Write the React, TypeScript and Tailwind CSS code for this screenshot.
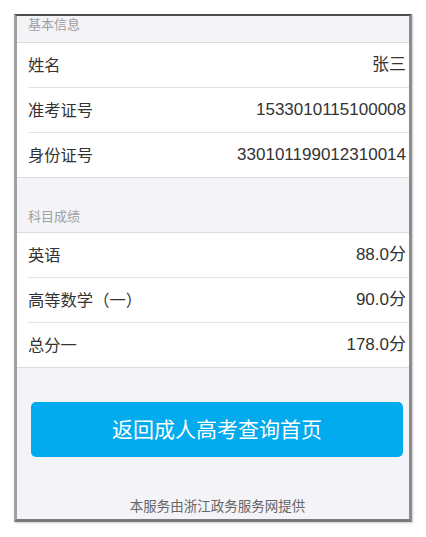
import React from "react";

const font = { fontFamily: '"Liberation Sans", "Noto Sans CJK SC", sans-serif' };

function Row({ label, value, last }: { label: string; value: string; last?: boolean }) {
  return (
    <div className={last ? "border-b border-[#dcdcdc] bg-white" : "bg-white"}>
      <div className={last ? "ml-[11px] flex h-[44px] items-center justify-between pr-[3px]" : "ml-[11px] flex h-[45px] items-center justify-between border-b border-[#e2e2e2] pr-[3px]"}>
        <span className="text-[16.3px] text-[#333]">{label}</span>
        <span className="text-[17px] text-[#333]">{value}</span>
      </div>
    </div>
  );
}

export default function App() {
  return (
    <div className="h-[537px] w-[426px] bg-white pl-[14px] pt-[14px]" style={font}>
      <div className="h-[508px] w-[398px] overflow-hidden border-b-[3px] border-l-[3px] border-r-[3px] border-t-[2px] border-b-[#7a7a7a] border-l-[#a0a0a0] border-r-[#8c8c8c] border-t-[#4d4d4d] bg-[#f3f3f8] shadow-[1px_1px_2px_rgba(0,0,0,0.2)]">
        <div className="border-b border-[#dcdcdc] pb-[8px] pl-[11px] text-[13px] leading-[18px] text-[#a0a0a0]">基本信息</div>
        <Row label="姓名" value="张三" />
        <Row label="准考证号" value="1533010115100008" />
        <Row label="身份证号" value="330101199012310014" last />
        <div className="border-b border-[#dcdcdc] pb-[6px] pl-[11px] pt-[30px] text-[13px] leading-[18px] text-[#a0a0a0]">科目成绩</div>
        <Row label="英语" value="88.0分" />
        <Row label="高等数学（一）" value="90.0分" />
        <Row label="总分一" value="178.0分" last />
        <div className="ml-[14px] mr-[6px] mt-[34px] flex h-[55px] items-center justify-center rounded-[5px] bg-[#02aaee] text-[21px] text-white">
          返回成人高考查询首页
        </div>
        <div className="mt-[41px] pl-[9px] text-center text-[13.5px] leading-[18px] text-[#666]">本服务由浙江政务服务网提供</div>
      </div>
    </div>
  );
}
